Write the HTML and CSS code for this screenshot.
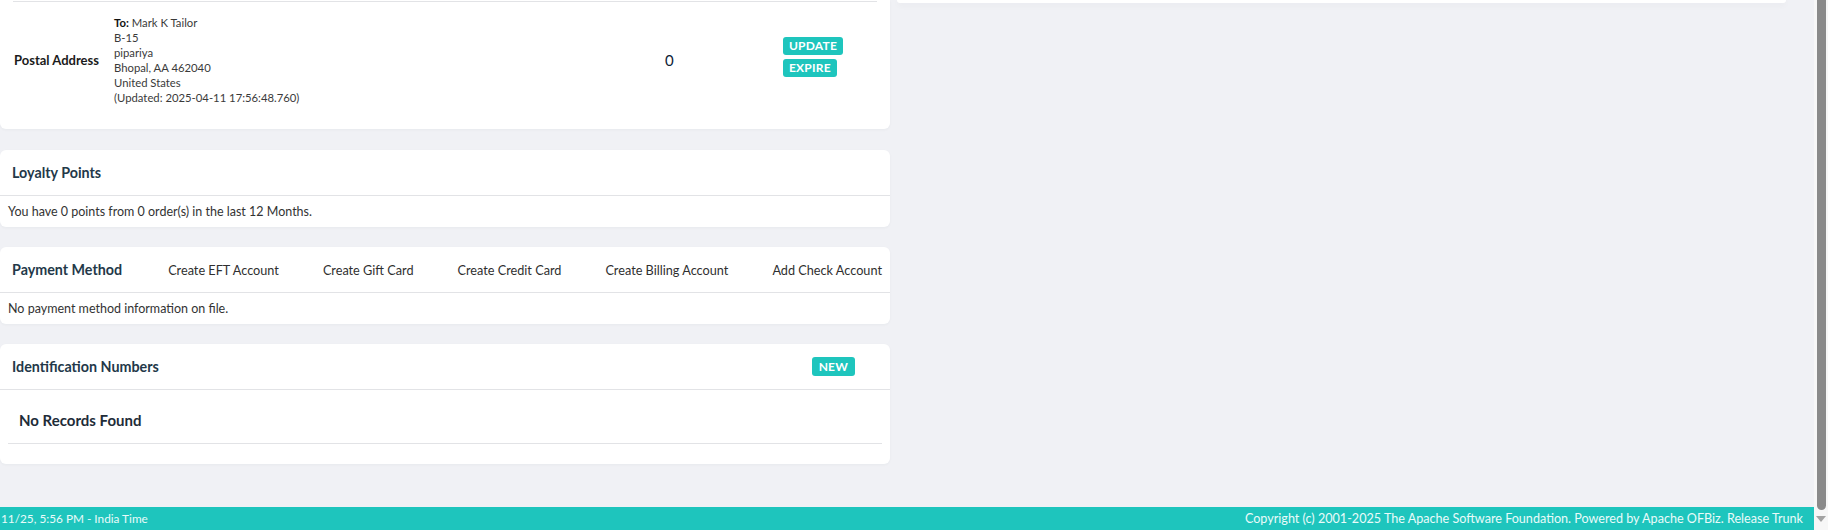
FILE: index.html
```html
<!DOCTYPE html>
<html lang="en">
<head>
<meta charset="utf-8">
<title>Party Profile</title>
<link rel="stylesheet" href="styles.css">
</head>
<body>
<div class="page">
  <div class="viewport">
    <main class="content">
      <div class="col col-left">
        <section class="card card-postal">
          <div class="addr-row">
            <div class="addr-label">Postal Address</div>
            <div class="addr-text">
              <div><b>To:</b> Mark K Tailor</div>
              <div>B-15</div>
              <div>pipariya</div>
              <div>Bhopal, AA 462040</div>
              <div>United States</div>
              <div>(Updated: 2025-04-11 17:56:48.760)</div>
            </div>
            <div class="addr-count">0</div>
            <div class="addr-actions">
              <a class="btn" href="#">UPDATE</a>
              <a class="btn" href="#">EXPIRE</a>
            </div>
          </div>
        </section>

        <section class="card">
          <header class="card-head"><h3 class="card-title">Loyalty Points</h3></header>
          <div class="card-body">You have 0 points from 0 order(s) in the last 12 Months.</div>
        </section>

        <section class="card">
          <header class="card-head card-head-links">
            <h3 class="card-title">Payment Method</h3>
            <nav class="head-links">
              <a href="#">Create EFT Account</a>
              <a href="#">Create Gift Card</a>
              <a href="#">Create Credit Card</a>
              <a href="#">Create Billing Account</a>
              <a href="#">Add Check Account</a>
            </nav>
          </header>
          <div class="card-body">No payment method information on file.</div>
        </section>

        <section class="card">
          <header class="card-head card-head-btn">
            <h3 class="card-title">Identification Numbers</h3>
            <a class="btn btn-new" href="#">NEW</a>
          </header>
          <div class="card-body card-body-records">
            <div class="no-records">No Records Found</div>
          </div>
        </section>
      </div>
      <div class="col col-right">
        <section class="card card-stub"></section>
      </div>
    </main>
    <footer class="footer">
      <span class="footer-time">11/25, 5:56 PM - India Time</span>
      <span class="footer-copy">Copyright (c) 2001-2025 The Apache Software Foundation. Powered by Apache OFBiz. Release Trunk</span>
    </footer>
  </div>
  <div class="scrollbar">
    <div class="scroll-thumb"></div>
    <div class="scroll-arrow"></div>
  </div>
</div>
</body>
</html>
```

FILE: styles.css
```css
* { box-sizing: border-box; }
html, body { margin: 0; padding: 0; }
body {
  font-family: "Lato", "Noto Sans", sans-serif;
  color: #2b2b2b;
  background: #f0f1f5;
  overflow: hidden;
}
a { text-decoration: none; color: inherit; }

.page {
  display: flex;
  width: 1828px;
  height: 530px;
}
.viewport {
  flex: 1;
  display: flex;
  flex-direction: column;
  min-width: 0;
}
.content {
  flex: 1;
  display: flex;
  gap: 7px;
  background: #f0f1f5;
  overflow: hidden;
}
.col-left { width: 890px; flex-shrink: 0; }
.col-right { width: 889px; flex-shrink: 0; }

.card {
  background: #fff;
  border-radius: 6px;
  margin-bottom: 20px;
  box-shadow: 0 1px 3px rgba(30, 40, 60, 0.04);
}
.card-postal {
  border-radius: 0 0 6px 6px;
  padding: 1px 13px 11px;
  margin-bottom: 21px;
}
.card-stub {
  height: 3px;
  border-radius: 0 0 6px 6px;
  box-shadow: 0 2px 6px rgba(30, 40, 60, 0.05);
}

.addr-row {
  display: flex;
  align-items: center;
  border-top: 1px solid #e2e3e6;
  padding: 13px 0;
}
.addr-label {
  width: 101px;
  padding-left: 1px;
  font-size: 13px;
  font-weight: 700;
  color: #1b1b1b;
  white-space: nowrap;
}
.addr-text {
  width: 538px;
  font-size: 11.3px;
  line-height: 15px;
  color: #3a3a3a;
}
.addr-text b { color: #111; }
.addr-count {
  width: 131px;
  padding-left: 13px;
  font-size: 15px;
  color: #0d2236;
}
.addr-actions {
  display: flex;
  flex-direction: column;
  align-items: flex-start;
  gap: 4px;
  margin-bottom: 6px;
}

.btn {
  display: inline-block;
  background: #1ec5bd;
  color: #fff;
  font-size: 12px;
  font-weight: 700;
  line-height: 18px;
  padding: 0 6px;
  border-radius: 3px;
  letter-spacing: 0.2px;
  white-space: nowrap;
}

.card-head {
  height: 46px;
  display: flex;
  align-items: center;
  padding: 0 12px;
  border-bottom: 1px solid #e2e3e6;
  white-space: nowrap;
}
.card-title {
  margin: 0;
  font-size: 14.3px;
  font-weight: 700;
  color: #233849;
  flex-shrink: 0;
}
.card-head-links { padding-right: 0; }
.head-links {
  display: flex;
  flex-shrink: 0;
  gap: 44px;
  margin-left: 46px;
  font-size: 12.7px;
  color: #2f2f2f;
}
.head-links a { flex-shrink: 0; }
.card-head-btn {
  justify-content: space-between;
  padding-right: 35px;
}
.btn-new {
  line-height: 19px;
  padding: 0 7px;
}

.card-body {
  padding: 8px;
  font-size: 12.5px;
  line-height: 15px;
  color: #333;
}
.card-body-records {
  padding: 8px 8px 20px;
}
.no-records {
  border-bottom: 1px solid #e2e3e6;
  padding: 12px 11px 13px;
  font-size: 15px;
  line-height: 20px;
  font-weight: 700;
  color: #1e2c38;
}

.footer {
  height: 23px;
  background: #1ec5bd;
  color: #e9fbfa;
  font-size: 12.6px;
  display: flex;
  align-items: center;
  justify-content: space-between;
  padding: 0 11px 0 1px;
  white-space: nowrap;
}
.footer-time { font-size: 11.8px; }

.scrollbar {
  width: 14px;
  background: #f7f7f7;
  display: flex;
  flex-direction: column;
  align-items: center;
}
.scroll-thumb {
  width: 9px;
  height: 510px;
  background: #8a8a8a;
  border-radius: 0 0 5px 5px;
}
.scroll-arrow {
  margin-top: 6px;
  width: 0;
  height: 0;
  border-left: 5px solid transparent;
  border-right: 5px solid transparent;
  border-top: 6px solid #a3a3a3;
}
```
